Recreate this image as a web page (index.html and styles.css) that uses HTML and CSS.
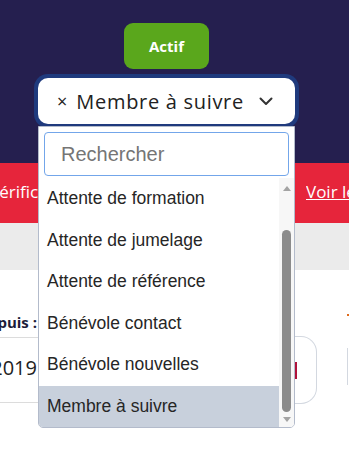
FILE: index.html
```html
<!DOCTYPE html>
<html lang="fr">
<head>
    <meta charset="UTF-8">
    <meta name="viewport" content="width=device-width, initial-scale=1.0">
    <title>Membres</title>
    <link rel="stylesheet" href="styles.css">
</head>
<body>
    <header class="hero">
        <button class="status-btn">Actif</button>
        <div class="select-wrap">
            <div class="select-box">
                <span class="clear">&times;</span>
                <span class="select-value">Membre à suivre</span>
                <svg class="chevron" width="14" height="9" viewBox="0 0 14 9">
                    <path d="M1.5 1.5 L7 7 L12.5 1.5" fill="none" stroke="#333" stroke-width="2" stroke-linecap="round" stroke-linejoin="round"/>
                </svg>
            </div>

            <div class="dropdown">
                <div class="search-wrap">
                    <input class="search" type="text" placeholder="Rechercher">
                </div>
                <div class="list-row">
                    <ul class="options">
                        <li>Attente de formation</li>
                        <li>Attente de jumelage</li>
                        <li>Attente de référence</li>
                        <li>Bénévole contact</li>
                        <li>Bénévole nouvelles</li>
                        <li class="selected">Membre à suivre</li>
                    </ul>
                    <div class="scrollbar">
                        <span class="arrow up"></span>
                        <div class="track"><div class="thumb"></div></div>
                        <span class="arrow down"></span>
                    </div>
                </div>
            </div>
        </div>
    </header>

    <div class="alert">
        <span class="alert-text">Vérification requise</span>
        <a class="alert-link" href="#">Voir les détails</a>
    </div>

    <div class="tabs"></div>

    <section class="details">
        <div class="info">
            <div class="info-row label-row">
                <span class="info-cell label">Depuis :</span>
            </div>
            <div class="info-row value-row">
                <span class="info-cell value">12 mars 2019</span>
            </div>
        </div>
        <div class="card">
            <span class="card-mark"></span>
        </div>
        <div class="side">
            <span class="side-dot"></span>
            <div class="side-card"></div>
        </div>
    </section>
</body>
</html>
```

FILE: styles.css
```css
html {
    overflow-x: hidden;
}

body {
    margin: 0;
    min-height: 463px;
    font-family: "Open Sans", "Liberation Sans", sans-serif;
    background: #ffffff;
}

.hero {
    background: #251f4f;
    height: 163px;
    display: flex;
    flex-direction: column;
    align-items: center;
    padding-right: 16px;
    box-sizing: border-box;
    padding-top: 23px;
}

.status-btn {
    width: 85px;
    height: 46px;
    background: #5aa71c;
    color: #ffffff;
    border: none;
    border-radius: 9px;
    font-family: "Open Sans", sans-serif;
    font-weight: 700;
    font-size: 15px;
}

.select-wrap {
    position: relative;
    margin-top: 9px;
}

.select-box {
    width: 257px;
    height: 46px;
    box-sizing: border-box;
    background: #ffffff;
    border-radius: 10px;
    box-shadow: 0 0 0 4px #1f3a7d;
    display: flex;
    align-items: center;
    padding-left: 19px;
    color: #222;
}

.clear {
    font-size: 18px;
    margin-right: 9px;
}

.select-value {
    font-size: 20px;
    letter-spacing: 0.7px;
}

.chevron {
    margin-left: 15px;
}

.dropdown {
    position: absolute;
    top: 48px;
    left: 0;
    width: 257px;
    height: 302px;
    box-sizing: border-box;
    background: #ffffff;
    border: 1px solid #b3bbcb;
    border-radius: 0 0 5px 5px;
    display: flex;
    flex-direction: column;
    overflow: hidden;
    z-index: 5;
}

.search-wrap {
    padding: 5px 5px 2px;
}

.search {
    display: block;
    width: 100%;
    height: 44px;
    box-sizing: border-box;
    border: 1px solid #73a6ea;
    border-radius: 4px;
    padding-left: 16px;
    font-family: "Liberation Sans", Arial, sans-serif;
    font-size: 20px;
    outline: none;
}

.search::placeholder {
    color: #757575;
}

.list-row {
    display: flex;
    flex: 1;
    min-height: 0;
}

.options {
    list-style: none;
    margin: 0;
    padding: 0;
    flex: 1;
    font-family: "Liberation Sans", Arial, sans-serif;
    font-size: 17.5px;
    color: #262626;
}

.options li {
    height: 41.5px;
    line-height: 41.5px;
    padding-left: 8px;
}

.options li.selected {
    background: #c8d0dc;
}

.scrollbar {
    width: 15px;
    background: #f7f7f7;
    display: flex;
    flex-direction: column;
    align-items: center;
}

.arrow {
    width: 0;
    height: 0;
    border-left: 4px solid transparent;
    border-right: 4px solid transparent;
}

.arrow.up {
    border-bottom: 5px solid #a3a3a3;
    margin-top: 8px;
}

.arrow.down {
    border-top: 5px solid #a3a3a3;
    margin-bottom: 5px;
}

.track {
    flex: 1;
    width: 100%;
    display: flex;
    justify-content: center;
    padding: 39px 0 5px;
    box-sizing: border-box;
}

.thumb {
    width: 9px;
    background: #8b8b8b;
    border-radius: 5px;
}

.alert {
    background: #e6253b;
    height: 60px;
    display: flex;
    align-items: center;
    justify-content: space-between;
    overflow: hidden;
    white-space: nowrap;
    font-size: 17px;
    color: #ffffff;
}

.alert-text {
    margin-left: -11px;
    margin-top: -4px;
}

.alert-link {
    color: #ffffff;
    margin-top: -4px;
    flex-shrink: 0;
    width: 43px;
    overflow: hidden;
}

.tabs {
    background: #ebebeb;
    height: 47px;
}

.details {
    display: flex;
    align-items: flex-start;
    padding-top: 41px;
}

.info {
    width: 295px;
    flex-shrink: 0;
}

.info-row {
    border-bottom: 1px solid #dcdcdc;
}

.info-cell {
    width: 37px;
    display: flex;
    justify-content: flex-end;
    overflow: hidden;
    white-space: nowrap;
}

.label-row {
    height: 22px;
    padding-bottom: 4px;
}

.label {
    font-weight: 700;
    font-size: 15px;
    line-height: 22px;
    color: #1d1d3a;
}

.value-row {
    height: 64px;
}

.value {
    font-size: 20px;
    line-height: 60px;
    color: #222;
}

.card {
    width: 22px;
    height: 66px;
    margin-top: 25px;
    border: 1px solid #d3d8e0;
    border-left: none;
    border-radius: 0 16px 16px 0;
    display: flex;
    align-items: center;
}

.card-mark {
    width: 2px;
    height: 17px;
    background: #b0123a;
}

.side {
    margin-left: 30px;
    padding-top: 3px;
}

.side-dot {
    display: block;
    width: 2px;
    height: 2px;
    background: #e06a1a;
}

.side-card {
    margin-top: 32px;
    height: 37px;
    border-left: 1px solid #d3d8e0;
}
```
